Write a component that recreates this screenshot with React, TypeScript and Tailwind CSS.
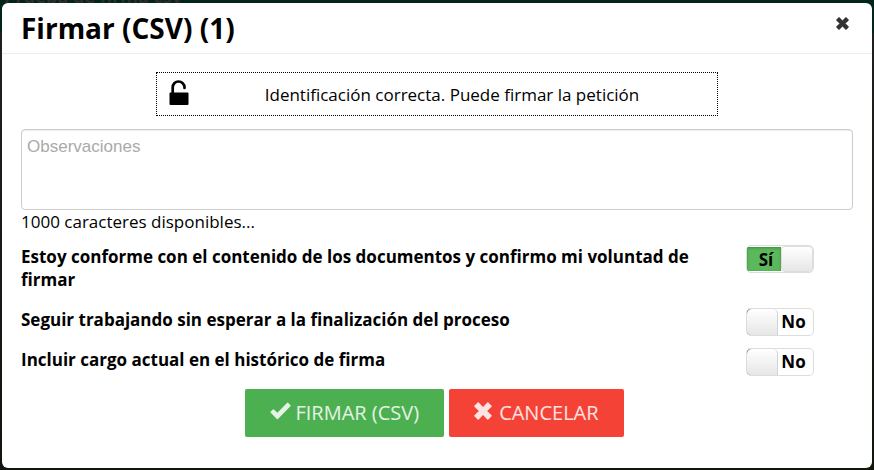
import { useState } from "react";
import type { ReactNode } from "react";

const MAX_CHARS = 1000;

const options = [
  { id: "conforme", label: "Estoy conforme con el contenido de los documentos y confirmo mi voluntad de firmar", on: true },
  { id: "seguir", label: "Seguir trabajando sin esperar a la finalización del proceso", on: false },
  { id: "cargo", label: "Incluir cargo actual en el histórico de firma", on: false },
];

function CrossIcon({ className }: { className: string }) {
  return (
    <svg viewBox="0 0 18 18" className={className} fill="currentColor" aria-hidden="true">
      <path d="M3.700.4Q4.200 0 4.700.4L9 4.900 13.300.4Q13.800 0 14.300.4L17.600 3.700Q18 4.200 17.600 4.700L13.100 9l4.500 4.300Q18 13.800 17.600 14.300L14.300 17.600Q13.800 18 13.300 17.600L9 13.100l-4.300 4.500Q4.200 18 3.700 17.600L.4 14.300Q0 13.800.4 13.300L4.900 9 .4 4.700Q0 4.200.4 3.700Z" />
    </svg>
  );
}

function CheckIcon() {
  return (
    <svg viewBox="0 0 21 18" className="mb-1 h-[18px] w-[21px]" fill="currentColor" aria-hidden="true">
      <path d="M17.2.7q.4-.4.8 0l2.6 2.6q.4.4 0 .8L8 16.9q-.6.6-1.2 0L.5 10.6q-.4-.4 0-.8l2.4-2.4q.5-.5 1 0l3.500 3.300Z" />
    </svg>
  );
}

function UnlockIcon() {
  return (
    <svg viewBox="0 0 20 26" className="mb-0.5 h-[26px] w-5 shrink-0" aria-hidden="true">
      <path d="M3.700 14V7.500a5.900 5.900 0 0 1 11.800-.2v.7" fill="none" stroke="#000" strokeWidth="2.700" strokeLinecap="round" />
      <rect x="0.500" y="12.500" width="19" height="12.500" rx="1" fill="#000" />
    </svg>
  );
}

function Toggle({ id, defaultOn }: { id: string; defaultOn: boolean }) {
  const [on, setOn] = useState(defaultOn);
  return (
    <span className="relative flex h-7 w-[68px] shrink-0 overflow-hidden rounded-[5px] border border-[#ddd] bg-white text-[17px] leading-[26px] font-bold">
      <input
        id={id}
        type="checkbox"
        checked={on}
        onChange={(e) => setOn(e.target.checked)}
        className="absolute inset-0 z-10 m-0 h-full w-full cursor-pointer opacity-0"
      />
      {on ? (
        <>
          <span className="my-px w-[34px] bg-[#5cb85c] pl-1 text-center shadow-[inset_0_1px_3px_#3d8b3d]">Sí</span>
          <span className="w-8 rounded-[4px] border border-[#ddd] bg-linear-to-b from-white to-[#e6e6e6]" />
        </>
      ) : (
        <>
          <span className="flex w-[31px] bg-linear-to-r from-[#3d8b3d] from-30% to-white to-30%">
            <span className="flex-1 rounded-t-[5px] border-r border-[#d5d5d5] bg-linear-to-b from-white to-[#e6e6e6]" />
          </span>
          <span className="flex-1 pr-1 text-center">No</span>
        </>
      )}
    </span>
  );
}

function ActionButton({ color, children }: { color: string; children: ReactNode }) {
  return (
    <button
      type="button"
      className={`flex h-12 cursor-pointer items-center rounded-[2px] px-[25px] text-xl text-white/85 ${color}`}
    >
      {children}
    </button>
  );
}

export default function App() {
  const [notes, setNotes] = useState("");

  return (
    <div className="relative min-h-screen overflow-hidden bg-[linear-gradient(#02251b_33px,#201f20_33px,#11150c)] px-0.5 pt-[3px] pb-0.5 font-['Open_Sans',sans-serif] text-[17px] text-black">
      {/* page heading that the dialog covers */}
      <p aria-hidden="true" className="absolute bottom-full left-1 -mb-2 text-lg leading-6 font-bold text-[#2d2d2d]">
        Prueba de firma csv
      </p>

      <div role="dialog" aria-labelledby="dialog-title" className="relative rounded-md bg-white pb-[31px]">
        <header className="flex h-[51px] items-start justify-between border-b border-[#eee] px-[19px]">
          <h1 id="dialog-title" className="pt-1 text-[28px] leading-[42px] font-bold">Firmar (CSV) (1)</h1>
          <button type="button" aria-label="Cerrar" className="mt-[14px] mr-1 cursor-pointer text-[#333]">
            <CrossIcon className="h-[13px] w-[13px]" />
          </button>
        </header>

        <div className="px-[19px] pt-[18px]">
          <div className="mx-auto flex h-[44px] w-[562px] max-w-full items-center border border-dotted border-black pl-3">
            <UnlockIcon />
            <p className="flex-1 pt-0.5 pr-0.5 text-center">Identificación correcta. Puede firmar la petición</p>
          </div>

          <textarea
            aria-label="Observaciones"
            placeholder="Observaciones"
            maxLength={MAX_CHARS}
            value={notes}
            onChange={(e) => setNotes(e.target.value)}
            className="mt-[13px] block h-[81px] w-full resize-none rounded-[4px] border border-[#ccc] px-[5px] py-[5px] font-['Liberation_Sans',sans-serif] text-[17px] leading-6 shadow-[inset_0_1px_1px_rgba(0,0,0,0.075)] outline-none placeholder:text-[#aaa]"
          />
          <p className="leading-6">{MAX_CHARS - notes.length} caracteres disponibles...</p>

          <div className="mt-[11px] flex flex-col gap-3 pr-[39px]">
            {options.map(({ id, label, on }) => (
              <div key={id} className="flex items-start justify-between first:mb-[5px]">
                <label htmlFor={id} className="max-w-[680px] font-bold leading-[23px]">{label}</label>
                <Toggle id={id} defaultOn={on} />
              </div>
            ))}
          </div>

          <div className="mt-[13px] flex justify-center gap-[5px] pr-[5px]">
            <ActionButton color="bg-[#4caf50]">
              <CheckIcon />
              <span className="ml-1">FIRMAR (CSV)</span>
            </ActionButton>
            <ActionButton color="bg-[#f44336]">
              <CrossIcon className="mb-1 h-[18px] w-[18px]" />
              <span className="ml-[7px]">CANCELAR</span>
            </ActionButton>
          </div>
        </div>
      </div>
    </div>
  );
}
